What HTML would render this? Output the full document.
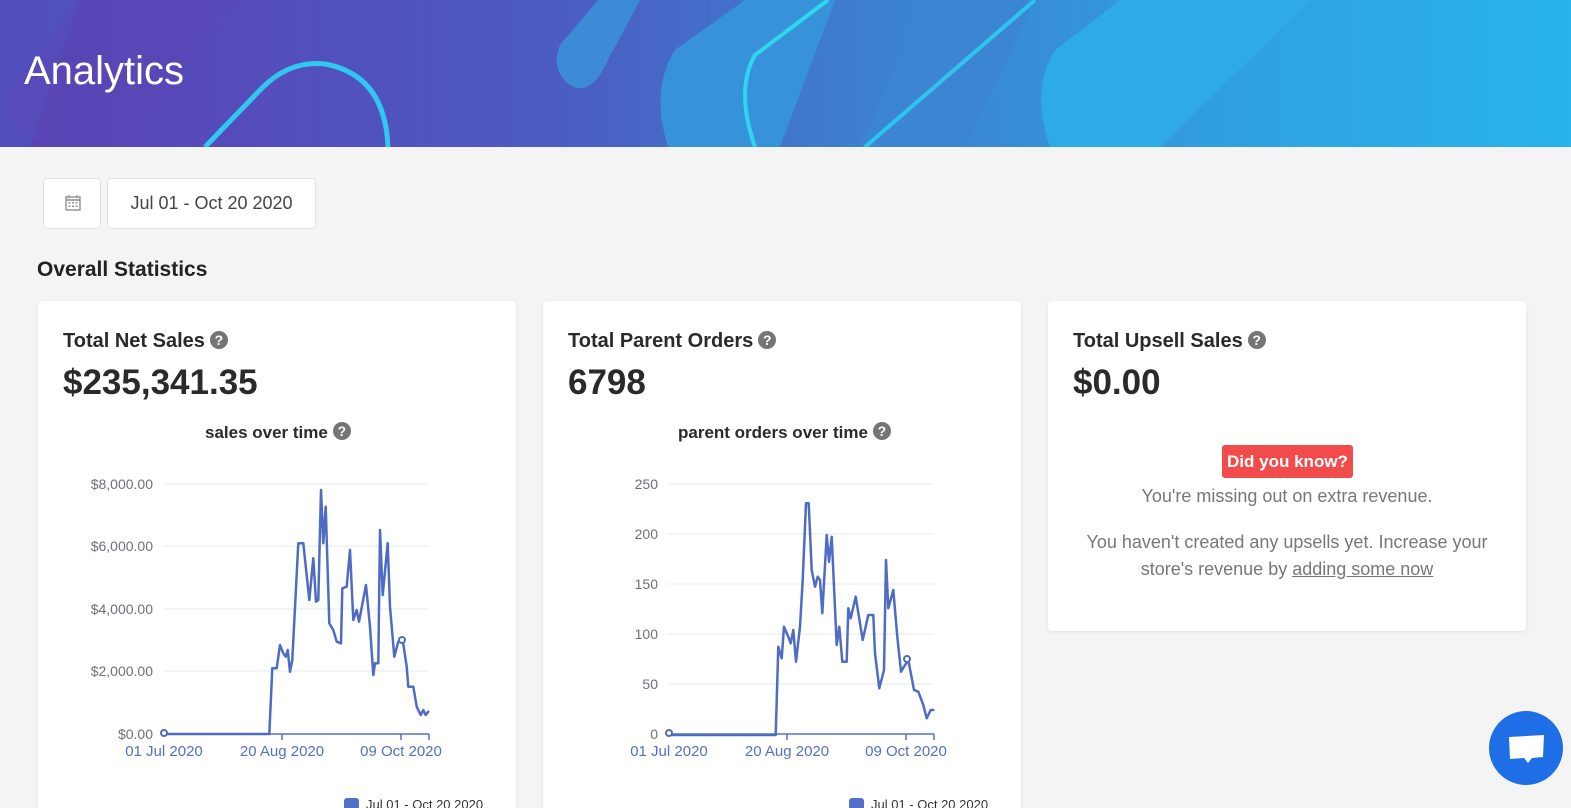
<!DOCTYPE html>
<html><head><meta charset="utf-8"><style>
*{margin:0;padding:0;box-sizing:border-box}
html{width:1571px;height:808px;overflow:hidden}
body{width:1571px;height:808px;overflow:hidden;background:#f4f4f4;font-family:"Liberation Sans",sans-serif;position:relative;color:#222}
.abs{position:absolute}
.card{position:absolute;background:#fff;border-radius:4px;box-shadow:0 1px 4px rgba(0,0,0,.08)}
.q{display:inline-block;width:18px;height:18px;border-radius:50%;background:#757575;color:#fff;font-size:14px;font-weight:bold;text-align:center;line-height:18px;vertical-align:2px;margin-left:5px}
.t{font-size:20px;font-weight:bold;color:#2a2a2a}
.big{font-size:35px;font-weight:bold;color:#2a2a2a}
.sub{font-size:17px;font-weight:bold;color:#2a2a2a}
</style></head><body>
<svg class="abs" style="left:0;top:0" width="1571" height="147">
<defs><linearGradient id="g" x1="0" x2="1"><stop offset="0" stop-color="#5b40b4"/><stop offset=".35" stop-color="#4c5bc2"/><stop offset=".55" stop-color="#3d7fd0"/><stop offset=".8" stop-color="#2fa2e2"/><stop offset="1" stop-color="#28b3ea"/></linearGradient></defs>
<rect width="1571" height="147" fill="url(#g)"/>
<path d="M0,0H80L30,147H0Z" fill="#4e55bf" opacity=".7"/>
<path d="M80,0H237L130,147H60Q0,140 10,90Z" fill="#5a48b6" opacity=".5"/>
<path d="M598,0H640L600,75Q585,95 570,85Q550,70 560,45Z" fill="#3d8bd6"/>
<path d="M745,0H835L780,147H668Q650,90 675,50Z" fill="#3892da"/>
<path d="M925,0H1035L965,147H860Z" fill="#3b85d3"/>
<path d="M1120,0H1310L1160,147H1050Q1030,90 1055,50Z" fill="#2eaae6"/>
<path d="M755,147Q735,90 755,55L828,0" stroke="#2fd6ef" stroke-width="4" fill="none"/>
<path d="M865,147L1035,0" stroke="#2fc4ec" stroke-width="4" fill="none"/>
<path d="M205,147L262,88Q290,60 325,64Q385,75 388,147" stroke="#30c8ee" stroke-width="5" fill="none"/>
</svg>
<div class="abs" style="left:24px;top:49px;font-size:40px;color:#fff">Analytics</div>

<div class="abs" style="left:43px;top:178px;width:58px;height:51px;background:#fff;border:1px solid #e2e2e2;border-radius:4px">
<svg width="58" height="51"><rect x="22" y="18" width="14" height="13" fill="none" stroke="#888" stroke-width="1.3"/><line x1="22" y1="21" x2="36" y2="21" stroke="#888" stroke-width="1.5"/><line x1="25" y1="16" x2="25" y2="19" stroke="#888"/><line x1="33" y1="16" x2="33" y2="19" stroke="#888"/><g fill="#999"><rect x="24.5" y="23" width="2" height="1.5"/><rect x="28" y="23" width="2" height="1.5"/><rect x="31.5" y="23" width="2" height="1.5"/><rect x="24.5" y="26.5" width="2" height="1.5"/><rect x="28" y="26.5" width="2" height="1.5"/><rect x="31.5" y="26.5" width="2" height="1.5"/></g></svg></div>
<div class="abs" style="left:107px;top:178px;width:209px;height:51px;background:#fff;border:1px solid #e2e2e2;border-radius:4px;font-size:18px;color:#444;text-align:center;line-height:49px">Jul 01 - Oct 20 2020</div>
<div class="abs" style="left:37px;top:258px;font-size:21px;font-weight:bold;color:#222">Overall Statistics</div>

<div class="card" style="left:38px;top:301px;width:478px;height:520px"></div>
<div class="card" style="left:543px;top:301px;width:478px;height:520px"></div>
<div class="card" style="left:1048px;top:301px;width:478px;height:330px"></div>

<div class="abs t" style="left:63px;top:330px">Total Net Sales<span class="q">?</span></div>
<div class="abs big" style="left:63px;top:363px">$235,341.35</div>
<div class="abs sub" style="left:205px;top:422px">sales over time<span class="q">?</span></div>

<div class="abs t" style="left:568px;top:330px">Total Parent Orders<span class="q">?</span></div>
<div class="abs big" style="left:568px;top:363px">6798</div>
<div class="abs sub" style="left:678px;top:422px">parent orders over time<span class="q">?</span></div>

<div class="abs t" style="left:1073px;top:330px">Total Upsell Sales<span class="q">?</span></div>
<div class="abs big" style="left:1073px;top:363px">$0.00</div>
<div class="abs" style="left:1222px;top:445px;width:131px;height:33px;background:#f24b4b;border-radius:3px;color:#fff;font-weight:bold;font-size:17px;text-align:center;line-height:33px">Did you know?</div>
<div class="abs" style="left:1048px;top:486px;width:478px;text-align:center;font-size:18px;color:#777">You're missing out on extra revenue.</div>
<div class="abs" style="left:1048px;top:529px;width:478px;text-align:center;font-size:18px;color:#777;line-height:27px">You haven't created any upsells yet. Increase your<br>store's revenue by <u>adding some now</u></div>

<svg class="abs" style="left:0;top:0" width="1571" height="808">
<g stroke="#e6e8ef" stroke-width="1">
<line x1="163" y1="484" x2="429" y2="484"/><line x1="163" y1="546" x2="429" y2="546"/><line x1="163" y1="609" x2="429" y2="609"/><line x1="163" y1="671" x2="429" y2="671"/>
<line x1="668" y1="484" x2="934" y2="484"/><line x1="668" y1="534" x2="934" y2="534"/><line x1="668" y1="584" x2="934" y2="584"/><line x1="668" y1="634" x2="934" y2="634"/><line x1="668" y1="684" x2="934" y2="684"/>
</g>
<g stroke="#5470c6" stroke-width="1.5"><line x1="163" y1="734" x2="429" y2="734"/><line x1="282" y1="734" x2="282" y2="740"/><line x1="401" y1="734" x2="401" y2="740"/><line x1="429" y1="734" x2="429" y2="740"/>
<line x1="668" y1="734" x2="934" y2="734"/><line x1="787" y1="734" x2="787" y2="740"/><line x1="906" y1="734" x2="906" y2="740"/><line x1="934" y1="734" x2="934" y2="740"/></g>
<g font-size="14" fill="#6e7079" text-anchor="end">
<text x="153" y="489">$8,000.00</text><text x="153" y="551">$6,000.00</text><text x="153" y="614">$4,000.00</text><text x="153" y="676">$2,000.00</text><text x="153" y="739">$0.00</text>
<text x="658" y="489">250</text><text x="658" y="539">200</text><text x="658" y="589">150</text><text x="658" y="639">100</text><text x="658" y="689">50</text><text x="658" y="739">0</text>
</g>
<g font-size="15" fill="#5470c6" text-anchor="middle">
<text x="164" y="756">01 Jul 2020</text><text x="282" y="756">20 Aug 2020</text><text x="401" y="756">09 Oct 2020</text>
<text x="669" y="756">01 Jul 2020</text><text x="787" y="756">20 Aug 2020</text><text x="906" y="756">09 Oct 2020</text>
</g>
<g fill="none" stroke="#4f6cc4" stroke-width="2.5" stroke-linejoin="round" stroke-linecap="round">
<polyline points="164,734 269.3,734 272.3,668.3 276.7,668.3 280,645 283.3,653.3 285.7,656.7 287.7,650 290,671.7 292.3,660 298.3,543.3 303.3,543.3 309.3,600 313.3,558.3 316,601.7 318.3,600 321,490 323.3,543.3 325.7,506.7 329.3,623.3 333.3,630 336.7,641.7 341,643.3 342.3,588.3 346.7,586.7 350,550 353.3,620 356.7,610 359,621.7 366,585 370,626.7 373.3,675 375,663.3 378.3,663.3 380,530 382.7,595 387.7,543.3 390,606.7 394.3,656.7 398.3,641.7 402.7,640 406.7,666.7 408.3,686.7 413.3,686.7 416.7,706.7 420.7,715 423.3,710 425.7,715 428.3,711.7"/>
<polyline points="669.7,735 775.7,735 778.3,646.7 781.7,658.3 784,626.7 788.3,636.7 790.7,643.3 793.3,630 796,661.7 800,626.7 802.7,580 806,503.3 808.7,503.3 811.7,570 815,586.7 817.7,576.7 820,580 822.3,613.3 826.7,535 829,561.7 831.7,536.7 836.7,645 839.3,626.7 842.3,661.7 846.7,661.7 848.3,608.3 850.7,618.3 855.7,596.7 862.7,640 868.3,615 873.3,615 875,653.3 879.3,688.3 884,670 886,560 888.3,608.3 893.3,590 897.3,636.7 901,671.7 904,666.7 908.3,660 914,690 918.3,691.7 923.3,705 926.7,718.3 930.7,710 933.3,710"/>
</g>
<g fill="#fff" stroke="#4f6cc4" stroke-width="2"><circle cx="164" cy="733" r="3"/><circle cx="669" cy="733" r="3"/><circle cx="402" cy="640" r="3"/><circle cx="907" cy="659" r="3"/></g>
<rect x="344" y="798" width="15" height="12" rx="3" fill="#5470c6"/><text x="366" y="809" font-size="13" fill="#333">Jul 01 - Oct 20 2020</text>
<rect x="849" y="798" width="15" height="12" rx="3" fill="#5470c6"/><text x="871" y="809" font-size="13" fill="#333">Jul 01 - Oct 20 2020</text>
<circle cx="1526" cy="748" r="37" fill="#1e6fe6"/>
<path d="M1509,737L1544,735L1543,757L1532,758L1528,763L1524,758L1510,759Z" fill="#fff"/>
</svg>
</body></html>
